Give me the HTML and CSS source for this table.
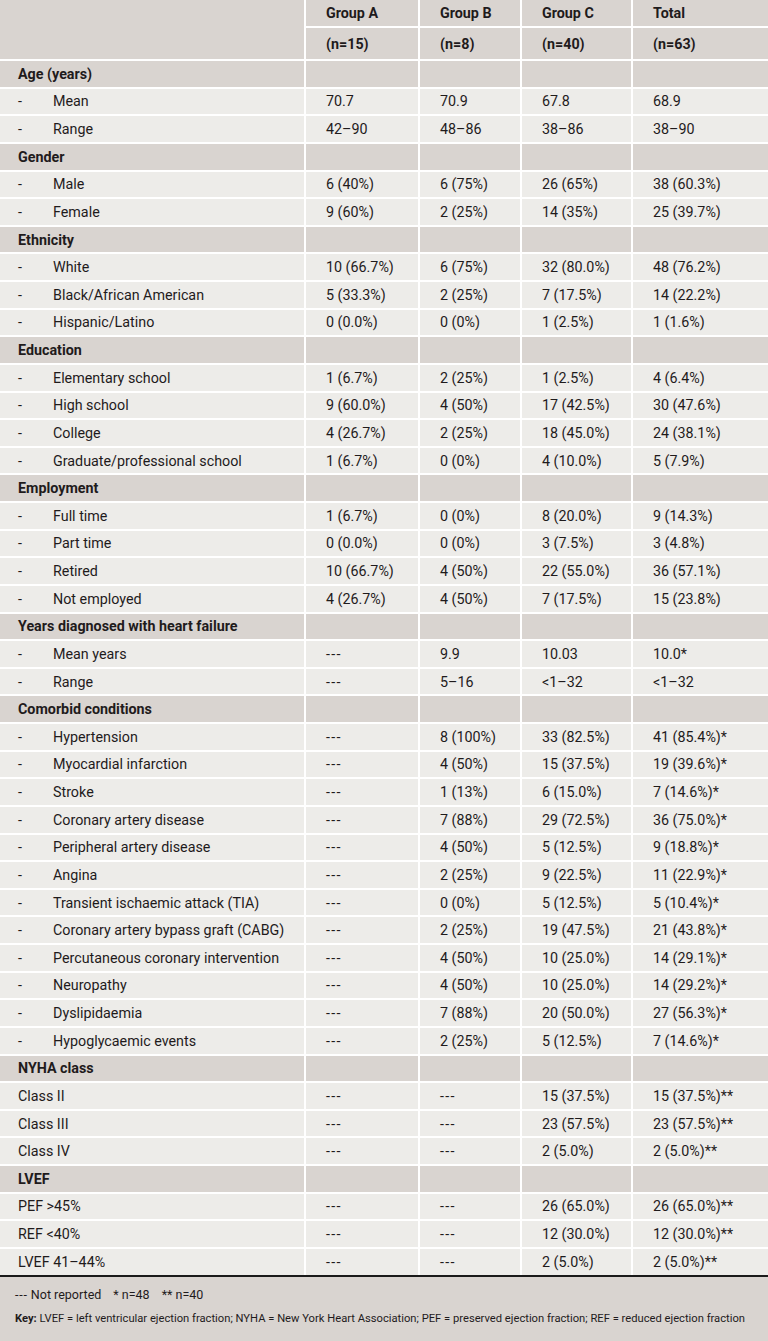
FILE: index.html
```html
<!DOCTYPE html>
<html lang="en">
<head>
<meta charset="utf-8">
<title>Patient characteristics</title>
<link rel="stylesheet" href="styles.css">
</head>
<body>
<div class="sheet">
  <div class="grid">
    <div class="cell head corner"></div>
    <div class="cell head">Group A</div>
    <div class="cell head">Group B</div>
    <div class="cell head">Group C</div>
    <div class="cell head">Total</div>
    <div class="cell head">(n=15)</div>
    <div class="cell head">(n=8)</div>
    <div class="cell head">(n=40)</div>
    <div class="cell head">(n=63)</div>

    <div class="cell sec label">Age (years)</div><div class="cell sec"></div><div class="cell sec"></div><div class="cell sec"></div><div class="cell sec"></div>
    <div class="cell label"><span class="dash">-</span>Mean</div><div class="cell">70.7</div><div class="cell">70.9</div><div class="cell">67.8</div><div class="cell">68.9</div>
    <div class="cell label"><span class="dash">-</span>Range</div><div class="cell">42–90</div><div class="cell">48–86</div><div class="cell">38–86</div><div class="cell">38–90</div>

    <div class="cell sec label">Gender</div><div class="cell sec"></div><div class="cell sec"></div><div class="cell sec"></div><div class="cell sec"></div>
    <div class="cell label"><span class="dash">-</span>Male</div><div class="cell">6 (40%)</div><div class="cell">6 (75%)</div><div class="cell">26 (65%)</div><div class="cell">38 (60.3%)</div>
    <div class="cell label"><span class="dash">-</span>Female</div><div class="cell">9 (60%)</div><div class="cell">2 (25%)</div><div class="cell">14 (35%)</div><div class="cell">25 (39.7%)</div>

    <div class="cell sec label">Ethnicity</div><div class="cell sec"></div><div class="cell sec"></div><div class="cell sec"></div><div class="cell sec"></div>
    <div class="cell label"><span class="dash">-</span>White</div><div class="cell">10 (66.7%)</div><div class="cell">6 (75%)</div><div class="cell">32 (80.0%)</div><div class="cell">48 (76.2%)</div>
    <div class="cell label"><span class="dash">-</span>Black/African American</div><div class="cell">5 (33.3%)</div><div class="cell">2 (25%)</div><div class="cell">7 (17.5%)</div><div class="cell">14 (22.2%)</div>
    <div class="cell label"><span class="dash">-</span>Hispanic/Latino</div><div class="cell">0 (0.0%)</div><div class="cell">0 (0%)</div><div class="cell">1 (2.5%)</div><div class="cell">1 (1.6%)</div>

    <div class="cell sec label">Education</div><div class="cell sec"></div><div class="cell sec"></div><div class="cell sec"></div><div class="cell sec"></div>
    <div class="cell label"><span class="dash">-</span>Elementary school</div><div class="cell">1 (6.7%)</div><div class="cell">2 (25%)</div><div class="cell">1 (2.5%)</div><div class="cell">4 (6.4%)</div>
    <div class="cell label"><span class="dash">-</span>High school</div><div class="cell">9 (60.0%)</div><div class="cell">4 (50%)</div><div class="cell">17 (42.5%)</div><div class="cell">30 (47.6%)</div>
    <div class="cell label"><span class="dash">-</span>College</div><div class="cell">4 (26.7%)</div><div class="cell">2 (25%)</div><div class="cell">18 (45.0%)</div><div class="cell">24 (38.1%)</div>
    <div class="cell label"><span class="dash">-</span>Graduate/professional school</div><div class="cell">1 (6.7%)</div><div class="cell">0 (0%)</div><div class="cell">4 (10.0%)</div><div class="cell">5 (7.9%)</div>

    <div class="cell sec label">Employment</div><div class="cell sec"></div><div class="cell sec"></div><div class="cell sec"></div><div class="cell sec"></div>
    <div class="cell label"><span class="dash">-</span>Full time</div><div class="cell">1 (6.7%)</div><div class="cell">0 (0%)</div><div class="cell">8 (20.0%)</div><div class="cell">9 (14.3%)</div>
    <div class="cell label"><span class="dash">-</span>Part time</div><div class="cell">0 (0.0%)</div><div class="cell">0 (0%)</div><div class="cell">3 (7.5%)</div><div class="cell">3 (4.8%)</div>
    <div class="cell label"><span class="dash">-</span>Retired</div><div class="cell">10 (66.7%)</div><div class="cell">4 (50%)</div><div class="cell">22 (55.0%)</div><div class="cell">36 (57.1%)</div>
    <div class="cell label"><span class="dash">-</span>Not employed</div><div class="cell">4 (26.7%)</div><div class="cell">4 (50%)</div><div class="cell">7 (17.5%)</div><div class="cell">15 (23.8%)</div>

    <div class="cell sec label">Years diagnosed with heart failure</div><div class="cell sec"></div><div class="cell sec"></div><div class="cell sec"></div><div class="cell sec"></div>
    <div class="cell label"><span class="dash">-</span>Mean years</div><div class="cell nr">---</div><div class="cell">9.9</div><div class="cell">10.03</div><div class="cell">10.0*</div>
    <div class="cell label"><span class="dash">-</span>Range</div><div class="cell nr">---</div><div class="cell">5–16</div><div class="cell">&lt;1–32</div><div class="cell">&lt;1–32</div>

    <div class="cell sec label">Comorbid conditions</div><div class="cell sec"></div><div class="cell sec"></div><div class="cell sec"></div><div class="cell sec"></div>
    <div class="cell label"><span class="dash">-</span>Hypertension</div><div class="cell nr">---</div><div class="cell">8 (100%)</div><div class="cell">33 (82.5%)</div><div class="cell">41 (85.4%)*</div>
    <div class="cell label"><span class="dash">-</span>Myocardial infarction</div><div class="cell nr">---</div><div class="cell">4 (50%)</div><div class="cell">15 (37.5%)</div><div class="cell">19 (39.6%)*</div>
    <div class="cell label"><span class="dash">-</span>Stroke</div><div class="cell nr">---</div><div class="cell">1 (13%)</div><div class="cell">6 (15.0%)</div><div class="cell">7 (14.6%)*</div>
    <div class="cell label"><span class="dash">-</span>Coronary artery disease</div><div class="cell nr">---</div><div class="cell">7 (88%)</div><div class="cell">29 (72.5%)</div><div class="cell">36 (75.0%)*</div>
    <div class="cell label"><span class="dash">-</span>Peripheral artery disease</div><div class="cell nr">---</div><div class="cell">4 (50%)</div><div class="cell">5 (12.5%)</div><div class="cell">9 (18.8%)*</div>
    <div class="cell label"><span class="dash">-</span>Angina</div><div class="cell nr">---</div><div class="cell">2 (25%)</div><div class="cell">9 (22.5%)</div><div class="cell">11 (22.9%)*</div>
    <div class="cell label"><span class="dash">-</span>Transient ischaemic attack (TIA)</div><div class="cell nr">---</div><div class="cell">0 (0%)</div><div class="cell">5 (12.5%)</div><div class="cell">5 (10.4%)*</div>
    <div class="cell label"><span class="dash">-</span>Coronary artery bypass graft (CABG)</div><div class="cell nr">---</div><div class="cell">2 (25%)</div><div class="cell">19 (47.5%)</div><div class="cell">21 (43.8%)*</div>
    <div class="cell label"><span class="dash">-</span>Percutaneous coronary intervention</div><div class="cell nr">---</div><div class="cell">4 (50%)</div><div class="cell">10 (25.0%)</div><div class="cell">14 (29.1%)*</div>
    <div class="cell label"><span class="dash">-</span>Neuropathy</div><div class="cell nr">---</div><div class="cell">4 (50%)</div><div class="cell">10 (25.0%)</div><div class="cell">14 (29.2%)*</div>
    <div class="cell label"><span class="dash">-</span>Dyslipidaemia</div><div class="cell nr">---</div><div class="cell">7 (88%)</div><div class="cell">20 (50.0%)</div><div class="cell">27 (56.3%)*</div>
    <div class="cell label"><span class="dash">-</span>Hypoglycaemic events</div><div class="cell nr">---</div><div class="cell">2 (25%)</div><div class="cell">5 (12.5%)</div><div class="cell">7 (14.6%)*</div>

    <div class="cell sec label">NYHA class</div><div class="cell sec"></div><div class="cell sec"></div><div class="cell sec"></div><div class="cell sec"></div>
    <div class="cell label">Class II</div><div class="cell nr">---</div><div class="cell nr">---</div><div class="cell">15 (37.5%)</div><div class="cell">15 (37.5%)**</div>
    <div class="cell label">Class III</div><div class="cell nr">---</div><div class="cell nr">---</div><div class="cell">23 (57.5%)</div><div class="cell">23 (57.5%)**</div>
    <div class="cell label">Class IV</div><div class="cell nr">---</div><div class="cell nr">---</div><div class="cell">2 (5.0%)</div><div class="cell">2 (5.0%)**</div>

    <div class="cell sec label">LVEF</div><div class="cell sec"></div><div class="cell sec"></div><div class="cell sec"></div><div class="cell sec"></div>
    <div class="cell label">PEF &gt;45%</div><div class="cell nr">---</div><div class="cell nr">---</div><div class="cell">26 (65.0%)</div><div class="cell">26 (65.0%)**</div>
    <div class="cell label">REF &lt;40%</div><div class="cell nr">---</div><div class="cell nr">---</div><div class="cell">12 (30.0%)</div><div class="cell">12 (30.0%)**</div>
    <div class="cell label">LVEF 41–44%</div><div class="cell nr">---</div><div class="cell nr">---</div><div class="cell">2 (5.0%)</div><div class="cell">2 (5.0%)**</div>
  </div>
  <div class="foot">
    <p class="note"><span class="nrs">---</span> Not reported<span class="gap"></span>* n=48<span class="gap"></span>** n=40</p>
    <p class="key"><b>Key:</b> LVEF = left ventricular ejection fraction; NYHA = New York Heart Association; PEF = preserved ejection fraction; REF = reduced ejection fraction</p>
  </div>
</div>
</body>
</html>
```

FILE: styles.css
```css
* { box-sizing: border-box; }

html, body {
  margin: 0;
  padding: 0;
  background: #d9d4d0;
}

body {
  font-family: Roboto, "Liberation Sans", sans-serif;
  color: #1f1b1c;
  width: 768px;
}

.sheet {
  width: 768px;
  min-height: 1341px;
  background: #d9d4d0;
}

.grid {
  display: grid;
  grid-template-columns: 304px 112px 100px 109px 135px;
  grid-template-rows: 26px 31px;
  grid-auto-rows: 25.63px;
  gap: 2px;
  background: #ffffff;
  border-bottom: 2px solid #1a1a1a;
}

.cell {
  background: #edece9;
  font-size: 14.3px;
  line-height: 16px;
  padding-left: 20px;
  display: flex;
  align-items: center;
  white-space: nowrap;
}

.cell.sec,
.cell.head {
  background: #d9d4d0;
}

.cell.head {
  font-weight: 700;
}

.cell.corner {
  grid-row: span 2;
}

.cell.label {
  padding-left: 18px;
}

.cell.sec.label {
  font-weight: 700;
}

.cell.nr {
  letter-spacing: 1.3px;
}

.dash {
  display: inline-block;
  width: 35px;
}

.foot {
  padding: 10px 15px 0;
}

.foot p {
  margin: 0;
}

.note {
  font-size: 12.5px;
  line-height: 16px;
}

.nrs {
  letter-spacing: 0.8px;
}

.gap {
  display: inline-block;
  width: 12px;
}

.key {
  margin-top: 9px !important;
  font-size: 11.2px;
  line-height: 14px;
}
```
